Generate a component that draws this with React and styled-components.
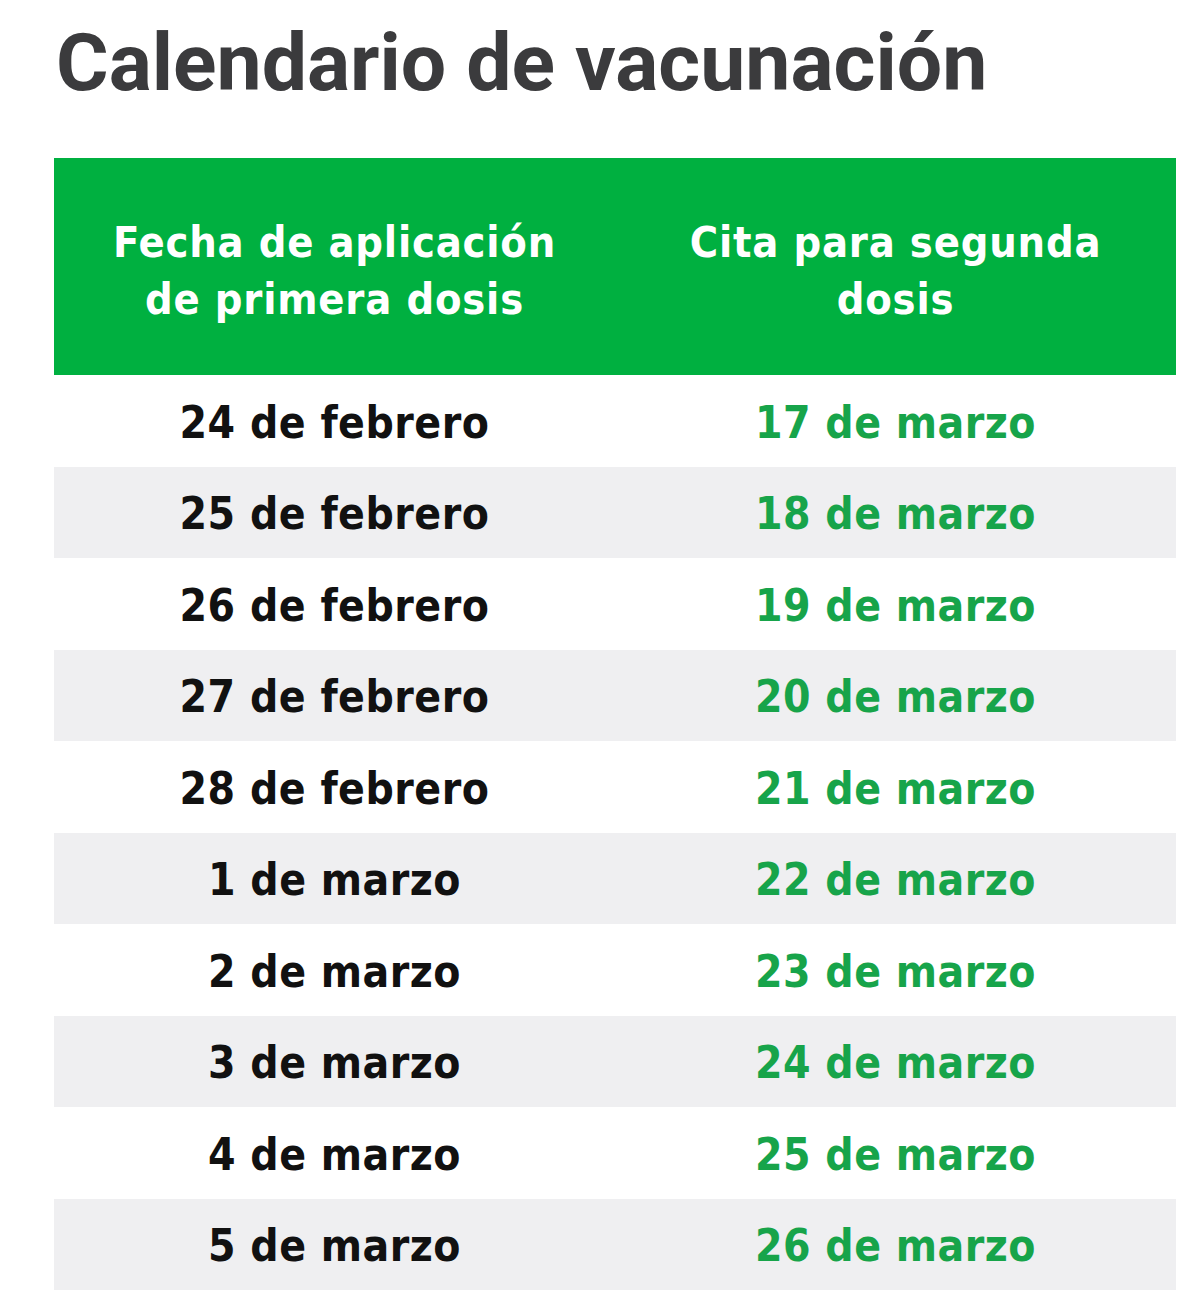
import React from "react";
import styled, { createGlobalStyle } from "styled-components";

const Global = createGlobalStyle`
  html, body { margin: 0; padding: 0; background: #ffffff; }
  body { width: 1200px; height: 1301px; overflow: hidden; }
`;

const Page = styled.div`
  padding: 17px 24px 0 54px;
  box-sizing: border-box;
  width: 1200px;
`;

const Title = styled.h1`
  margin: 0;
  padding-left: 2px;
  font-family: Roboto, "Liberation Sans", sans-serif;
  font-weight: 700;
  font-size: 80.5px;
  line-height: 92px;
  color: #3b3b3d;
  letter-spacing: 0;
`;

const Table = styled.div`
  margin-top: 49px;
  width: 1122px;
  display: flex;
  flex-direction: column;
`;

const Header = styled.div`
  display: grid;
  grid-template-columns: 1fr 1fr;
  align-items: center;
  height: 217px;
  background: #00b040;
`;

const HeadCell = styled.div`
  font-family: "DejaVu Sans Condensed", "DejaVu Sans", sans-serif;
  font-stretch: condensed;
  font-weight: 700;
  font-size: 43px;
  line-height: 57px;
  padding-top: 8px;
  color: #ffffff;
  text-align: center;
  letter-spacing: 0.8px;
`;

const Row = styled.div`
  display: grid;
  grid-template-columns: 1fr 1fr;
  align-items: center;
  height: 91.5px;
  background: ${(p) => (p.$alt ? "#efeff1" : "#ffffff")};
`;

const Cell = styled.div`
  font-family: "DejaVu Sans Condensed", "DejaVu Sans", sans-serif;
  font-stretch: condensed;
  font-weight: 700;
  font-size: 44px;
  padding-top: 3px;
  text-align: center;
  color: ${(p) => (p.$green ? "#17a44a" : "#111111")};
  letter-spacing: 0.5px;
`;

const rows = [
  ["24 de febrero", "17 de marzo"],
  ["25 de febrero", "18 de marzo"],
  ["26 de febrero", "19 de marzo"],
  ["27 de febrero", "20 de marzo"],
  ["28 de febrero", "21 de marzo"],
  ["1 de marzo", "22 de marzo"],
  ["2 de marzo", "23 de marzo"],
  ["3 de marzo", "24 de marzo"],
  ["4 de marzo", "25 de marzo"],
  ["5 de marzo", "26 de marzo"],
];

export default function App() {
  return (
    <>
      <Global />
      <Page>
        <Title>Calendario de vacunación</Title>
        <Table>
          <Header>
            <HeadCell>
              Fecha de aplicación
              <br />
              de primera dosis
            </HeadCell>
            <HeadCell>
              Cita para segunda
              <br />
              dosis
            </HeadCell>
          </Header>
          {rows.map(([a, b], i) => (
            <Row key={a} $alt={i % 2 === 1}>
              <Cell>{a}</Cell>
              <Cell $green>{b}</Cell>
            </Row>
          ))}
        </Table>
      </Page>
    </>
  );
}
